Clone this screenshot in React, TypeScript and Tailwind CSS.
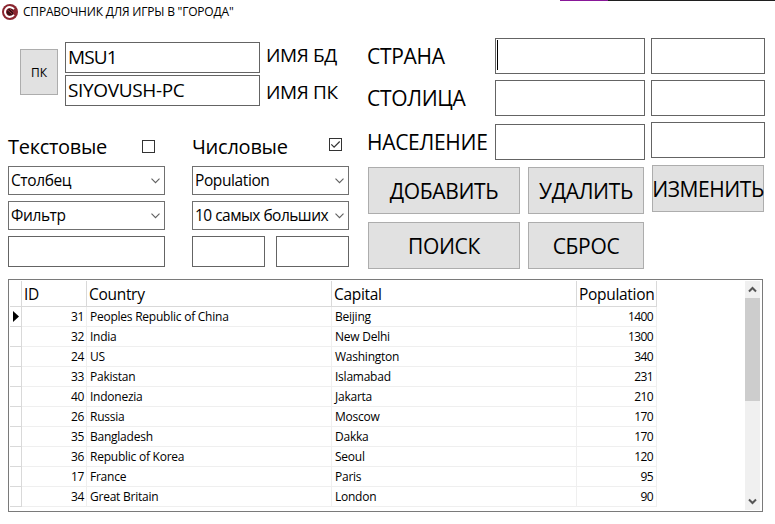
import { ReactNode } from "react";

const rows: [number, string, string, number][] = [
  [31, "Peoples Republic of China", "Beijing", 1400],
  [32, "India", "New Delhi", 1300],
  [24, "US", "Washington", 340],
  [33, "Pakistan", "Islamabad", 231],
  [40, "Indonezia", "Jakarta", 210],
  [26, "Russia", "Moscow", 170],
  [35, "Bangladesh", "Dakka", 170],
  [36, "Republic of Korea", "Seoul", 120],
  [17, "France", "Paris", 95],
  [34, "Great Britain", "London", 90],
];

function Box({ className = "", children }: { className?: string; children?: ReactNode }) {
  return <div className={`shrink-0 border border-[#646464] bg-white ${className}`}>{children}</div>;
}

function Button({ className = "", children }: { className?: string; children: ReactNode }) {
  return (
    <button
      className={`flex shrink-0 items-center justify-center border border-[#adadad] bg-[#e1e1e1] pt-0.5 whitespace-nowrap ${className}`}
    >
      {children}
    </button>
  );
}

function Combo({ children, className = "tracking-[-0.4px]" }: { children: string; className?: string }) {
  return (
    <div className="flex h-[29px] w-[157px] items-center justify-between border border-[#707070] pr-1 pl-0.5 text-[15.5px]">
      <span className={`pt-px whitespace-nowrap ${className}`}>{children}</span>
      <svg className="shrink-0" width="9" height="6" viewBox="0 0 9 6" fill="none" stroke="#606060" strokeWidth="1.1">
        <path d="M0.5 0.7 4.5 4.7 8.5 0.7" />
      </svg>
    </div>
  );
}

function Check({ checked = false }: { checked?: boolean }) {
  return (
    <div className="h-[13px] w-[13px] border border-[#333333]">
      {checked && (
        <svg width="11" height="11" viewBox="0 0 11 11" fill="none" stroke="#333" strokeWidth="1.2">
          <path d="M1.3 5.3 4.1 8.1 9.7 2.5" />
        </svg>
      )}
    </div>
  );
}

function Field({ label, caret = false }: { label: string; caret?: boolean }) {
  return (
    <div className="flex h-9 items-center justify-between">
      <span className="-ml-px pt-px text-[21px] tracking-[-0.3px] whitespace-nowrap">{label}</span>
      <Box className="h-9 w-[150px] pt-px pl-px">{caret && <div className="h-[30px] w-px bg-black" />}</Box>
    </div>
  );
}

function Arrow({ up = false }: { up?: boolean }) {
  return (
    <svg width="9" height="7" viewBox="0 0 9 7" fill="none" stroke="#555" strokeWidth="2">
      <path d={up ? "M1 5.5 4.5 2 8 5.5" : "M1 1.5 4.5 5 8 1.5"} />
    </svg>
  );
}

export default function App() {
  return (
    <main className="flex h-[524px] w-[775px] flex-col overflow-hidden bg-white font-['Open_Sans','Noto_Sans',sans-serif] leading-none text-black">
      <div className="flex h-px shrink-0 pl-[560px]">
        <div className="w-12 bg-[#881798]" />
        <div className="flex-1 bg-[#1f1f1f]" />
      </div>
      <header className="flex h-[21px] shrink-0 items-center pl-0.5">
        <svg width="16" height="16" viewBox="0 0 16 16">
          <circle cx="8" cy="8" r="8" fill="#8b2630" />
          <path d="M11.9 5.2A4.9 4.9 0 1 0 11.9 10.8" fill="none" stroke="#fff" strokeWidth="2" />
          <circle cx="8.2" cy="8" r="3.3" fill="#351216" />
          <path d="M5.2 5.6 10 9.8M7.5 4.6 12 8.6" stroke="#a0323c" strokeWidth="1" />
        </svg>
        <span className="ml-[5px] text-[12px] tracking-[-0.2px] whitespace-nowrap">СПРАВОЧНИК ДЛЯ ИГРЫ В "ГОРОДА"</span>
      </header>

      <div className="flex h-[257px] shrink-0 pt-4 pl-2">
        <section className="w-[360px]">
          <div className="flex h-[94px] pt-1 pl-3">
            <Button className="mt-[7px] h-[46px] w-[38px] text-[12px]">ПК</Button>
            <div className="ml-[7px] flex flex-col gap-0.5 text-[19px]">
              <Box className="flex h-[31px] w-[195px] items-center pl-0.5">
                <span className="tracking-[-0.9px]">MSU1</span>
              </Box>
              <Box className="flex h-[31px] w-[195px] items-center pl-0.5">
                <span className="tracking-[-0.35px]">SIYOVUSH-PC</span>
              </Box>
            </div>
            <div className="ml-1.5 flex flex-col gap-[18px] pt-1 text-[19px] whitespace-nowrap">
              <span className="tracking-[-0.35px]">ИМЯ БД</span>
              <span className="tracking-[-0.35px]">ИМЯ ПК</span>
            </div>
          </div>

          <div className="flex gap-[27px]">
            <div className="w-[157px]">
              <div className="flex h-[34px] items-start justify-between pt-1 pr-2.5">
                <span className="pt-px text-[20px] tracking-[-0.3px]">Текстовые</span>
                <div className="pt-1">
                  <Check />
                </div>
              </div>
              <div className="flex flex-col gap-1.5">
                <Combo>Столбец</Combo>
                <Combo>Фильтр</Combo>
                <Box className="h-[31px] w-[157px]" />
              </div>
            </div>
            <div className="w-[157px]">
              <div className="flex h-[34px] items-start justify-between pt-1 pr-[7px]">
                <span className="pt-px text-[20px] tracking-[-0.25px]">Числовые</span>
                <div className="pt-0.5">
                  <Check checked />
                </div>
              </div>
              <div className="flex flex-col gap-1.5">
                <Combo>Population</Combo>
                <Combo className="tracking-[-0.53px]">10 самых больших</Combo>
                <div className="flex justify-between">
                  <Box className="h-[31px] w-[73px]" />
                  <Box className="h-[31px] w-[73px]" />
                </div>
              </div>
            </div>
          </div>
        </section>

        <section className="w-[277px]">
          <Field label="СТРАНА" caret />
          <div className="h-1.5" />
          <Field label="СТОЛИЦА" />
          <div className="h-2" />
          <Field label="НАСЕЛЕНИЕ" />
          <div className="mt-[7px] grid grid-cols-[152px_116px] gap-2 text-[21px] tracking-[-0.35px]">
            <Button className="h-[47px]">ДОБАВИТЬ</Button>
            <Button className="h-[47px]">УДАЛИТЬ</Button>
            <Button className="h-[47px]">ПОИСК</Button>
            <Button className="h-[47px]">СБРОС</Button>
          </div>
        </section>

        <section className="ml-1.5 flex flex-col gap-1.5">
          <Box className="h-9 w-[114px]" />
          <Box className="h-9 w-[114px]" />
          <Box className="h-9 w-[114px]" />
          <Button className="mt-px ml-px h-[47px] w-28 text-[21px] tracking-[-0.45px]">ИЗМЕНИТЬ</Button>
        </section>
      </div>

      <section className="ml-2 flex h-[233px] w-[755px] shrink-0 justify-between border border-[#7a7a7a] p-px">
        <div className="w-[647px]">
          <div className="grid h-[26px] grid-cols-[12px_65px_245px_245px_80px] text-[15.5px] tracking-[-0.3px] *:border-r *:border-b *:border-[#d9d9d9] *:pt-1.5 *:whitespace-nowrap">
            <div />
            <div className="pl-0.5">ID</div>
            <div className="pl-0.5">Country</div>
            <div className="pl-0.5">Capital</div>
            <div className="pl-0.5">Population</div>
          </div>
          {rows.map(([id, country, capital, population], i) => (
            <div
              key={id}
              className="grid h-5 grid-cols-[12px_65px_245px_245px_80px] text-[12px] *:border-r *:border-b *:border-[#efefef] *:pt-1 *:whitespace-nowrap"
            >
              <div className="border-[#d9d9d9]! pl-[3px]">
                {i === 0 && (
                  <svg width="6" height="11" viewBox="0 0 6 11">
                    <path d="M0 0 6 5.5 0 11Z" />
                  </svg>
                )}
              </div>
              <div className="pr-0.5 text-right tracking-[-0.4px]">{id}</div>
              <div className="pl-[3px] tracking-[-0.24px]">{country}</div>
              <div className="pl-[3px] tracking-[-0.24px]">{capital}</div>
              <div className="pr-[3px] text-right tracking-[-0.6px]">{population}</div>
            </div>
          ))}
        </div>
        <div className="mr-px flex w-[15px] flex-col items-center bg-[#f0f0f0]">
          <div className="flex h-[17px] items-center">
            <Arrow up />
          </div>
          <div className="h-[103px] w-full bg-[#cdcdcd]" />
          <div className="mt-auto flex h-[17px] items-center">
            <Arrow />
          </div>
        </div>
      </section>
    </main>
  );
}
